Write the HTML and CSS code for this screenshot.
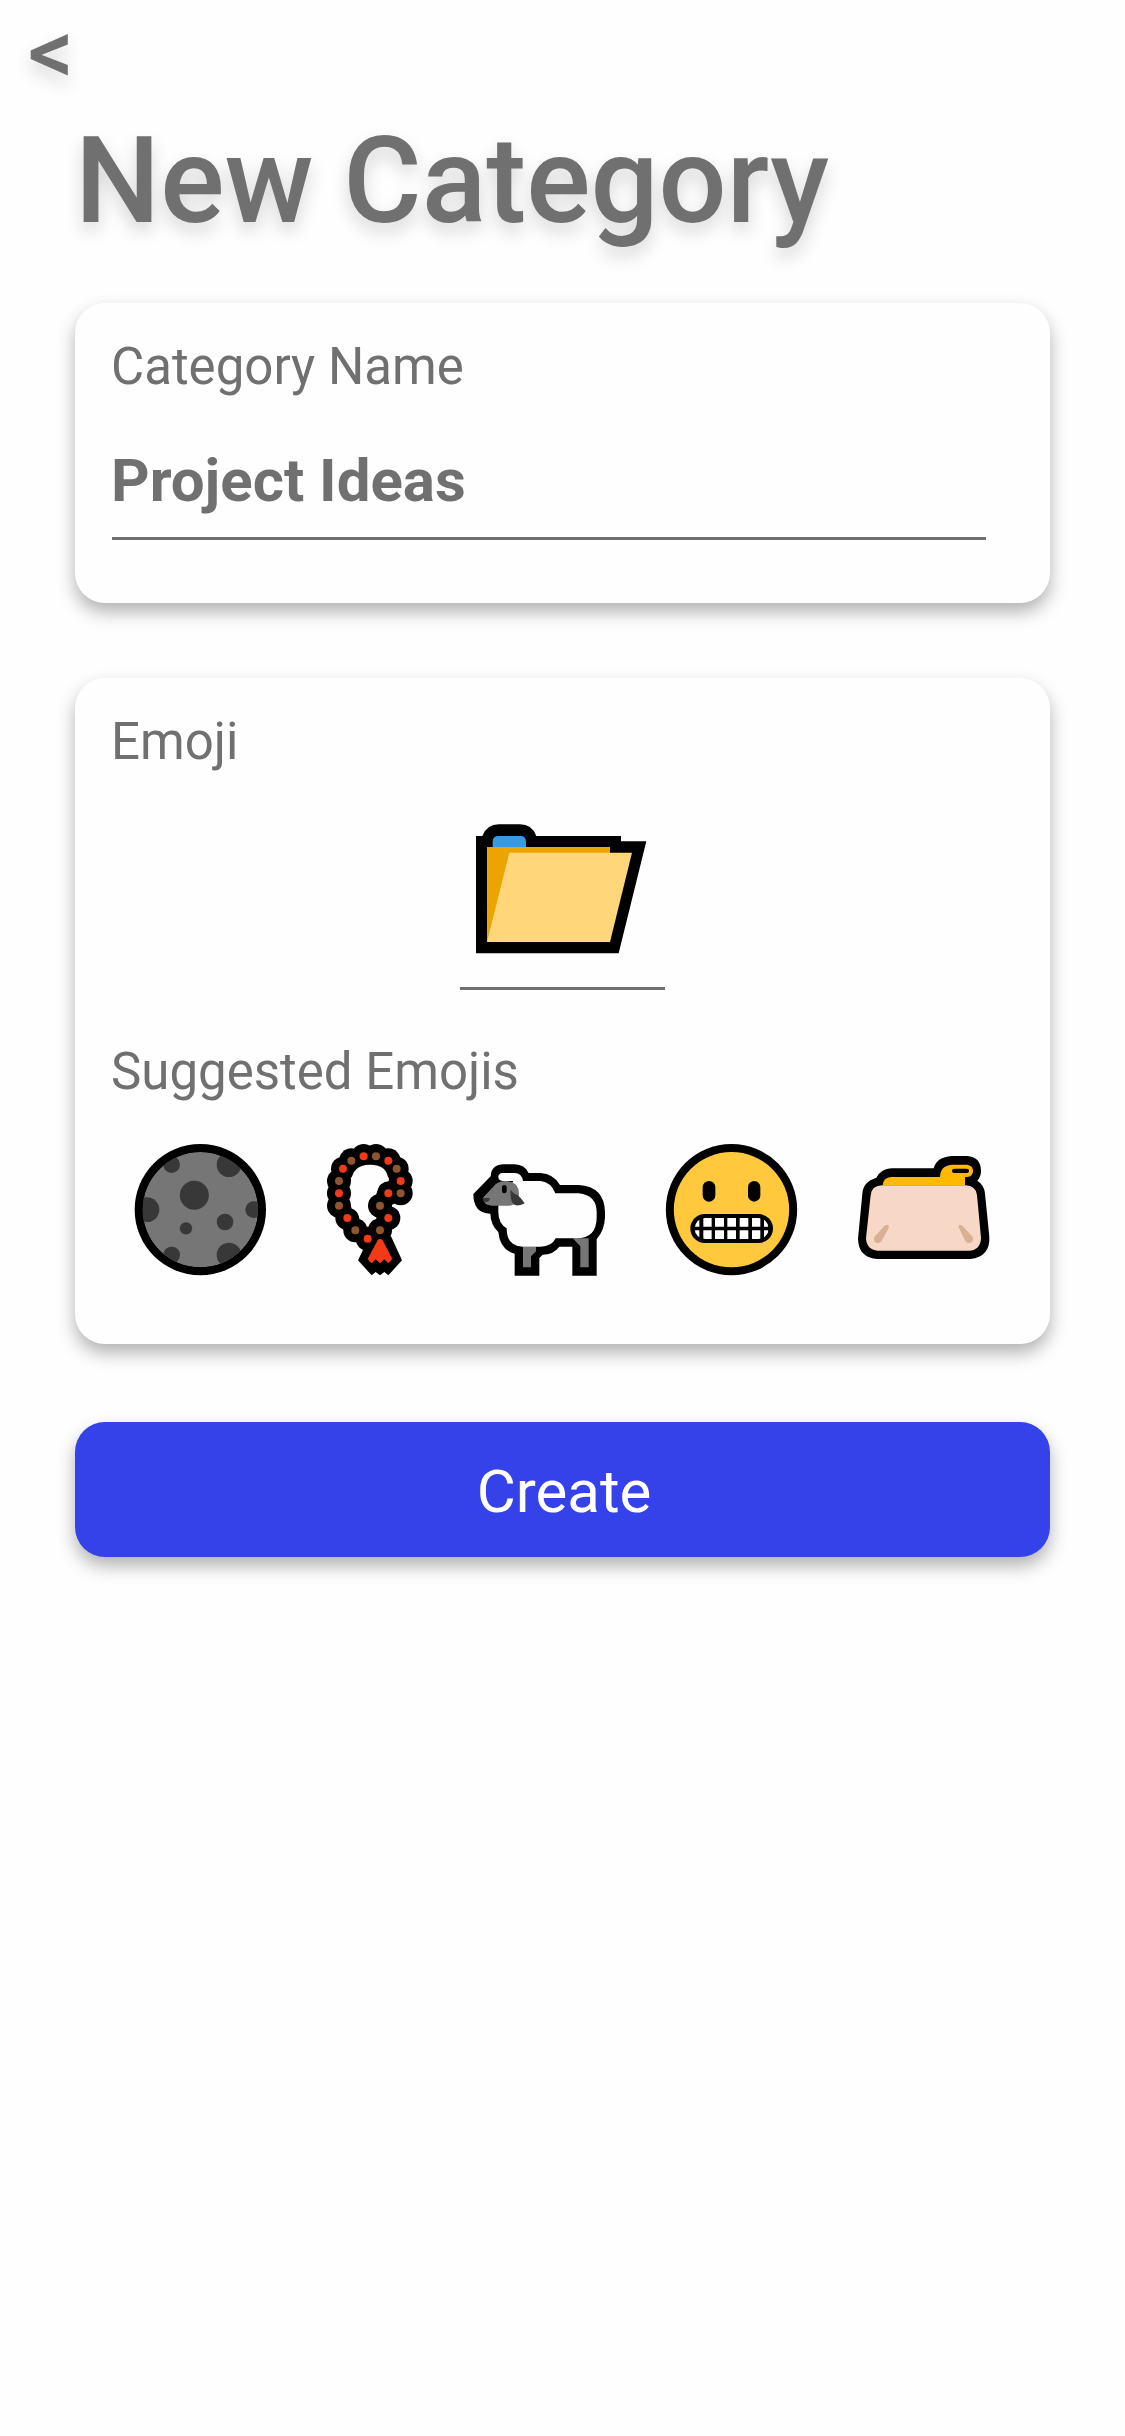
FILE: index.html
```html
<!DOCTYPE html>
<html lang="en">
<head>
<meta charset="utf-8">
<title>New Category</title>
<link rel="stylesheet" href="styles.css">
</head>
<body>
<header class="header">
  <a class="back">&lt;</a>
  <h1 class="title">New Category</h1>
</header>
<main class="form">
  <section class="card card-name">
    <div class="label">Category Name</div>
    <div class="name-input">Project Ideas</div>
  </section>
  <section class="card card-emoji">
    <div class="label">Emoji</div>
    <div class="emoji-input">
      <svg class="folder" viewBox="60 480 615 410">
        <path d="M108 528H127Q141 493 176 493H240Q276 493 289 528H543V544H619L536 880H108Z"/>
        <path fill="#3b97e0" d="M158 562V545Q158 528 175 528H241Q258 528 258 545V562Z"/>
        <path fill="#eca500" d="M141 561H510V600L180 846H141Z"/>
        <path fill="#ffd679" d="M208 578H576L510 846H141Z"/>
      </svg>
    </div>
    <div class="label label-suggested">Suggested Emojis</div>
    <div class="suggestions">
      <svg class="emoji" viewBox="0 0 480 480">
        <defs><clipPath id="disc"><circle cx="241" cy="239" r="173"/></clipPath></defs>
        <circle cx="241" cy="239" r="197"/>
        <g clip-path="url(#disc)">
          <circle cx="241" cy="239" r="173" fill="#767676"/>
          <g fill="#383838">
            <circle cx="155" cy="104" r="25"/><circle cx="327" cy="104" r="37"/>
            <circle cx="223" cy="196" r="43.500"/><circle cx="81" cy="239" r="37"/>
            <circle cx="401" cy="239" r="25"/><circle cx="315" cy="276" r="25"/>
            <circle cx="198" cy="295" r="18.500"/><circle cx="155" cy="375" r="25"/>
            <circle cx="327" cy="375" r="37"/>
          </g>
        </g>
      </svg>
      <svg class="emoji emoji-beads" viewBox="0 0 360 480">
        <path class="cord" d="M173 326L136 301 112 264 87 227V153L99 116 124 92 161 79H198L235 92 260 116 272 153V190H235L210 227 235 264 210 301Z"/>
        <g>
          <circle cx="161" cy="79" r="37"/><circle cx="198" cy="79" r="37"/><circle cx="124" cy="92" r="37"/><circle cx="235" cy="92" r="37"/>
          <circle cx="99" cy="116" r="36"/><circle cx="260" cy="116" r="36"/><circle cx="87" cy="153" r="36"/><circle cx="272" cy="153" r="36"/>
          <circle cx="87" cy="190" r="36"/><circle cx="87" cy="227" r="36"/><circle cx="272" cy="190" r="36"/><circle cx="235" cy="190" r="36"/>
          <circle cx="210" cy="227" r="36"/><circle cx="235" cy="264" r="36"/><circle cx="112" cy="264" r="36"/><circle cx="136" cy="301" r="36"/>
          <circle cx="210" cy="301" r="36"/><circle cx="173" cy="326" r="36"/>
        </g>
        <path fill="#fefefe" d="M124 235V160Q124 104 180 104Q234 104 235 153Q207 156 200 189Q173 195 173 220V238Q176 256 190 264Q176 271 173 287Q164 266 148 263Q143 242 124 235Z"/>
        <path d="M160 358L144 391 185 436 197 426 210 436 223 426 235 436 276 391 243 319H178Z"/>
        <path fill="#f23a18" d="M203 331Q210 322 218 331L246 385Q247 390 235 400L223 388 210 400 197 388 185 400Q173 391 174 385Z"/>
        <g fill="#f23a18">
          <circle cx="161" cy="79" r="12"/><circle cx="235" cy="92" r="12"/><circle cx="99" cy="116" r="12"/><circle cx="272" cy="153" r="12"/>
          <circle cx="87" cy="190" r="12"/><circle cx="235" cy="190" r="12"/><circle cx="112" cy="264" r="12"/><circle cx="235" cy="264" r="12"/><circle cx="173" cy="326" r="12"/>
        </g>
        <g fill="#8e562e">
          <circle cx="198" cy="79" r="12"/><circle cx="124" cy="92" r="12"/><circle cx="260" cy="116" r="12"/><circle cx="87" cy="153" r="12"/>
          <circle cx="272" cy="190" r="12"/><circle cx="87" cy="227" r="12"/><circle cx="210" cy="227" r="12"/><circle cx="136" cy="301" r="12"/><circle cx="210" cy="301" r="12"/>
        </g>
      </svg>
      <svg class="emoji" viewBox="0 0 480 480">
        <path d="M40 192L92 139Q94 103 132 103H164Q194 104 206 129H242Q280 131 300 165H356Q434 170 435 247V262Q434 300 410 328V437H337V350L326 350H298Q280 374 248 374L238 384V437H164V371Q120 360 115 306Q92 285 91 251Q40 250 40 192Z"/>
        <path fill="#767676" d="M189 350H228V364L213 379V412H189ZM338 325H386V412H361V349Z"/>
        <path fill="#fefefe" d="M128 129H164Q185 129 189 153H242Q274 157 286 190H356Q410 196 410 247V262Q410 325 350 325H287Q275 350 242 350H189Q140 350 140 295Q115 280 115 245V227L160 153H128Q115 152 115 141Q115 130 128 129Z"/>
        <path fill="#767676" d="M70 202L107 163Q119 153 138 153Q176 154 177 190Q177 227 145 227H96Q68 226 70 202Z"/>
        <path fill="#383838" d="M67 204H90Q88 216 78 216Q69 215 67 204ZM152 178Q157 190 172 195Q184 203 194 220Q180 229 164 225Q149 216 152 178Z"/>
        <rect x="126" y="165" width="14" height="25" rx="7"/>
      </svg>
      <svg class="emoji" viewBox="0 0 480 480">
        <circle cx="244.500" cy="239" r="197"/><circle cx="244.500" cy="239" r="173" fill="#ffc83d"/>
        <rect x="158" y="153" width="38" height="62" rx="19"/><rect x="294" y="153" width="37" height="62" rx="18.500"/>
        <rect x="121" y="252" width="248" height="87" rx="43.500"/>
        <clipPath id="teeth"><rect x="134" y="264" width="222" height="63" rx="31.500"/></clipPath>
        <path clip-path="url(#teeth)" fill="#fefefe" d="M134 264H148V290H134ZM160 264H185V290H160ZM195 264H222V290H195ZM232 264H258V290H232ZM269 264H295V290H269ZM306 264H331V290H306ZM342 264H356V290H342ZM134 301H148V327H134ZM160 301H185V327H160ZM195 301H222V327H195ZM232 301H258V327H232ZM269 301H295V327H269ZM306 301H331V327H306ZM342 301H356V327H342Z"/>
      </svg>
      <svg class="emoji" viewBox="-15 0 480 480">
        <path d="M52 191Q54 155 94 143Q109 116 139 115H266Q275 81 320 78H366Q407 80 408 123Q408 140 397 152Q418 165 420 191L433 320Q436 380 376 387H98Q40 383 39 326Z"/>
        <path fill="#ffb900" d="M113 166Q115 142 139 141H285Q286 107 320 104H366Q384 106 384 123Q384 140 366 141H360V166Z"/>
        <rect x="321" y="116" width="51" height="13" rx="6.500"/>
        <path fill="#f7d7c6" d="M77 196Q80 166 112 166H361Q393 167 396 196L408 323Q407 360 372 362H98Q65 360 63 325Z"/>
        <path fill="#d8b094" d="M120 286Q132 280 132 292L110 333Q104 342 93 338Q84 332 88 321ZM351 286Q339 280 341 292L361 333Q367 342 378 338Q387 332 383 321Z"/>
      </svg>
    </div>
  </section>
  <button class="create">Create</button>
</main>
</body>
</html>
```
FILE: styles.css
```css
* { box-sizing: border-box; }
body {
  margin: 0;
  min-height: 2436px;
  background: #fefefe;
  color: #707070;
  font-family: Roboto, "Liberation Sans", sans-serif;
}
.header {
  height: 303px;
  text-shadow: 0 9px 18px rgba(0, 0, 0, .16);
}
.back {
  display: block;
  height: 111px;
  padding: 8px 0 0 28px;
  font-size: 90px;
  line-height: 90px;
  font-weight: 500;
}
.title {
  margin: 0;
  padding-left: 75px;
  font-size: 120px;
  line-height: 140px;
  font-weight: 500;
}
.form {
  display: flex;
  flex-direction: column;
  padding: 0 75px;
}
.card {
  padding: 34px 64px 0 36px;
  border-radius: 30px;
  background: #fefefe;
  box-shadow: 0 9px 18px rgba(0, 0, 0, .3);
}
.card-name { height: 300px; }
.card-emoji { height: 666px; margin-top: 75px; }
.label {
  font-size: 51px;
  line-height: 60px;
}
.name-input {
  height: 107px;
  margin: 36px 0 0 1px;
  padding-top: 13px;
  border-bottom: 3px solid #707070;
  font-size: 60px;
  line-height: 70px;
  font-weight: 700;
  text-indent: -1px;
}
.emoji-input {
  width: 205px;
  height: 170px;
  margin: 48px 0 0 349px;
  border-bottom: 3px solid #707070;
}
.folder { display: block; width: 205px; height: 136.67px; }
.label-suggested { margin-top: 52px; }
.suggestions {
  display: flex;
  gap: 30px;
  margin: 28px 0 0 9px;
}
.emoji { flex: none; width: 160px; height: 160px; }
.emoji-beads { width: 120px; }
.cord { fill: none; stroke: #000; stroke-width: 48px; }
.create {
  height: 135px;
  margin-top: 78px;
  padding: 5px 0 0 3px;
  border: 0;
  border-radius: 30px;
  background: #3541e9;
  color: #fff;
  box-shadow: 0 9px 18px rgba(0, 0, 0, .3);
  font-family: inherit;
  font-size: 60px;
  line-height: 70px;
}
```
